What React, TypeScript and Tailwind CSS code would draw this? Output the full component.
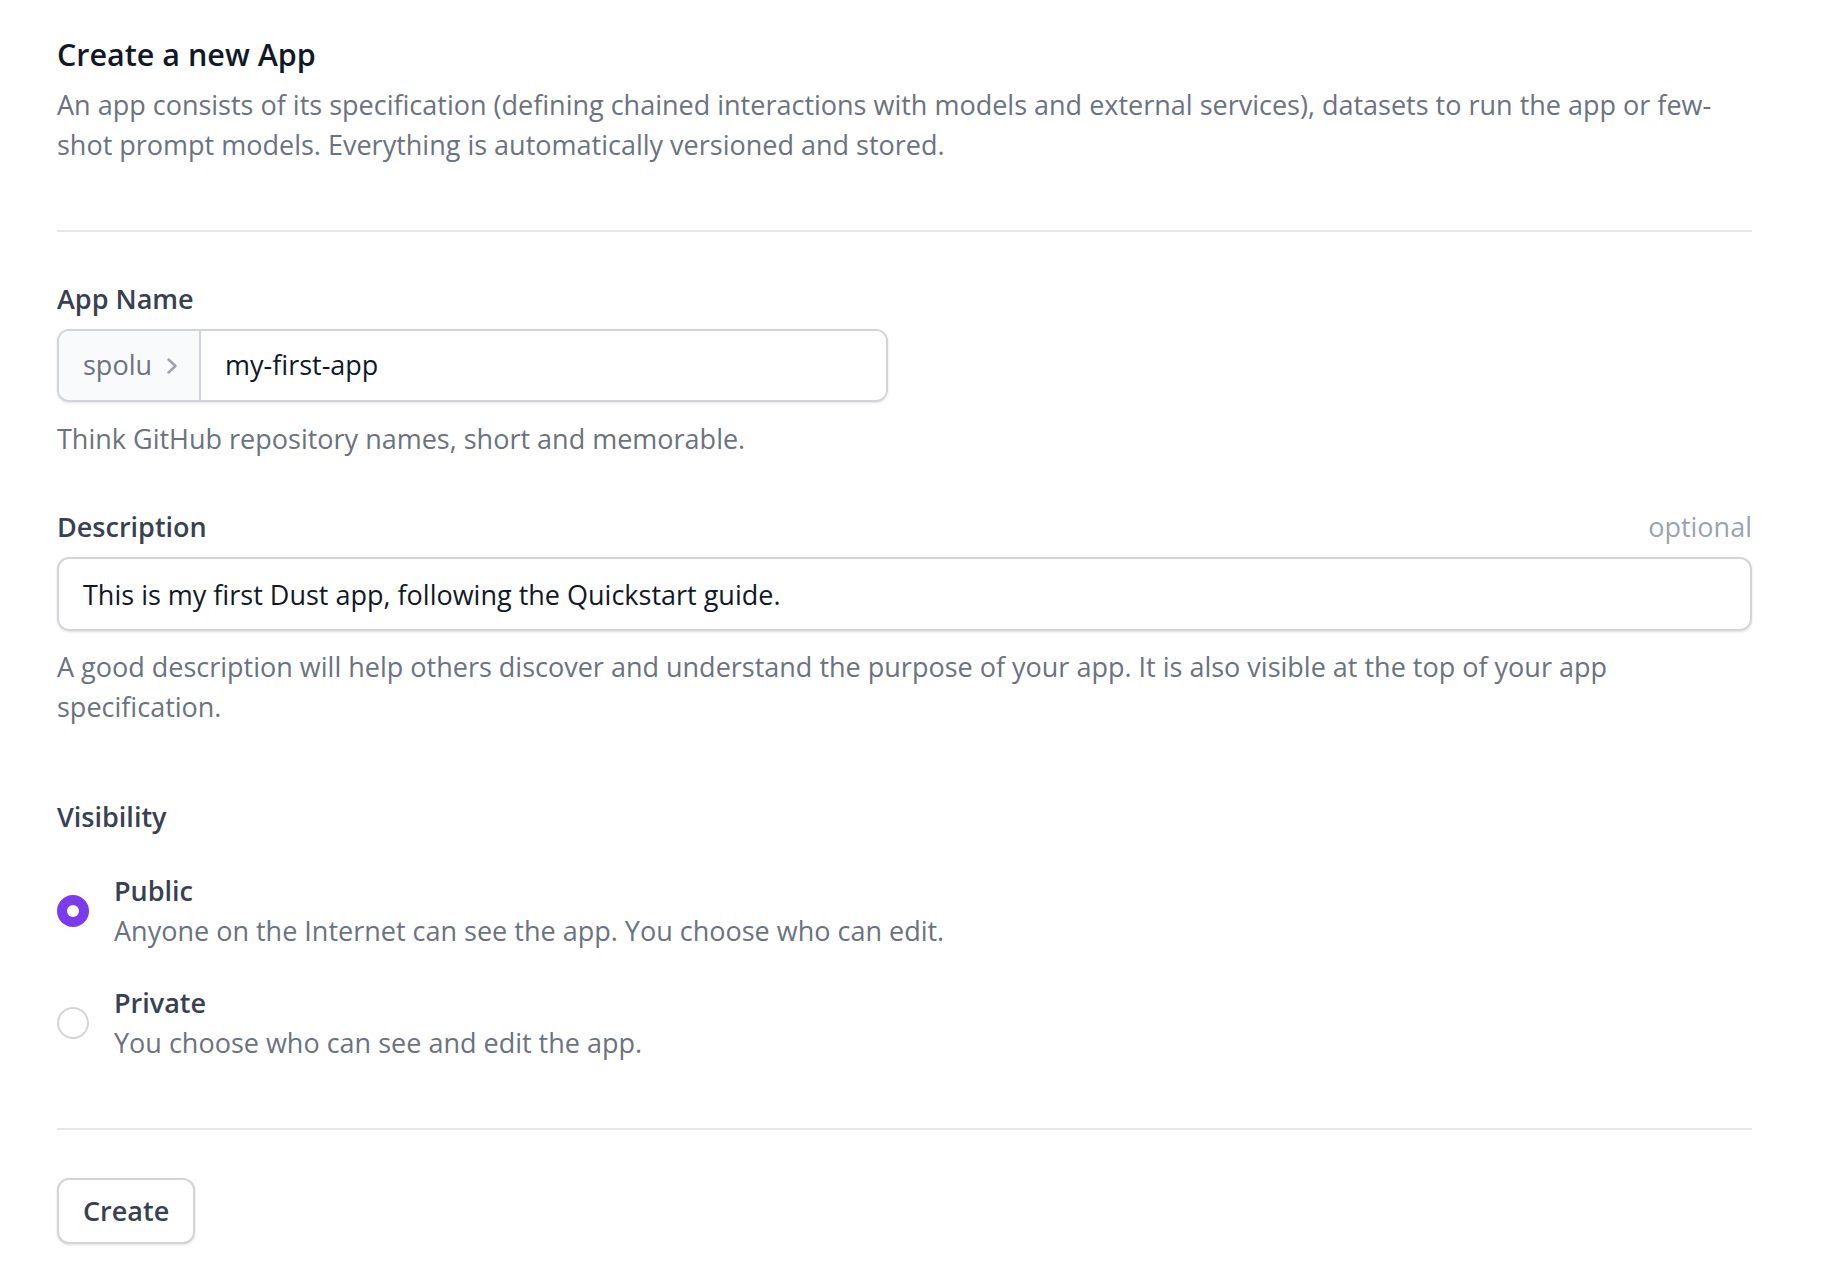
import React, { useState } from 'react'

const font = "font-['Open_Sans',sans-serif]"

const Radio: React.FC<{ checked: boolean; onClick: () => void }> = ({ checked, onClick }) => (
  <button
    onClick={onClick}
    className={`w-[32px] h-[32px] rounded-full flex items-center justify-center shrink-0 ${
      checked ? 'bg-[#7c3aed]' : 'bg-white border-2 border-[#d1d5db]'
    }`}
  >
    {checked && <span className="w-[12px] h-[12px] rounded-full bg-white" />}
  </button>
)

const App: React.FC = () => {
  const [name, setName] = useState('my-first-app')
  const [description, setDescription] = useState('This is my first Dust app, following the Quickstart guide.')
  const [visibility, setVisibility] = useState<'public' | 'private'>('public')

  return (
    <div className={`min-h-screen bg-white ${font}`}>
      <div className="w-[1752px] pl-[57px] pt-[34px] pb-10">
        <h1 className="text-[30.5px] leading-[40px] font-semibold text-[#111827]">Create a new App</h1>
        <p className="mt-[11px] text-[27px] leading-[40px] text-[#6b7280]">
          An app consists of its specification (defining chained interactions with models and external services), datasets to run the app or few-shot prompt models. Everything is automatically versioned and stored.
        </p>

        <div className="mt-[65px] border-t-2 border-[#e5e7eb]" />

        <div className="mt-[47px]">
          <label className="block text-[27px] leading-[40px] font-semibold text-[#374151]">App Name</label>
          <div className="mt-[10px] flex w-[831px] h-[73px] rounded-[12px] border-2 border-[#d1d5db] shadow-sm overflow-hidden">
            <div className="flex items-center pl-[24px] pr-[22px] bg-[#f9fafb] border-r-2 border-[#d1d5db] text-[27px] text-[#6b7280]">
              <span>spolu</span>
              <svg className="ml-[15px]" width="10" height="16" viewBox="0 0 10 16" fill="none" stroke="#9ca3af" strokeWidth="2.5" strokeLinecap="round" strokeLinejoin="round">
                <path d="M1.5 1.5L8.5 8l-7 6.5" />
              </svg>
            </div>
            <input
              value={name}
              onChange={(e) => setName(e.target.value)}
              className="flex-1 px-[24px] text-[27px] text-[#111827] outline-none bg-white"
            />
          </div>
          <p className="mt-[17px] text-[27px] leading-[40px] text-[#6b7280]">Think GitHub repository names, short and memorable.</p>
        </div>

        <div className="mt-[48px]">
          <div className="flex justify-between items-center">
            <label className="text-[27px] leading-[40px] font-semibold text-[#374151]">Description</label>
            <span className="text-[27px] leading-[40px] text-[#9ca3af]">optional</span>
          </div>
          <input
            value={description}
            onChange={(e) => setDescription(e.target.value)}
            className="mt-[10px] block w-full h-[74px] px-[24px] rounded-[12px] border-2 border-[#d1d5db] shadow-sm text-[27px] text-[#111827] outline-none"
          />
          <p className="mt-[16px] text-[27px] leading-[40px] text-[#6b7280]">
            A good description will help others discover and understand the purpose of your app. It is also visible at the top of your app specification.
          </p>
        </div>

        <div className="mt-[70px]">
          <div className="text-[27px] leading-[40px] font-semibold text-[#374151]">Visibility</div>
          <div className="mt-[34px] flex flex-col gap-[32px]">
            <div className="flex items-center gap-[25px]">
              <Radio checked={visibility === 'public'} onClick={() => setVisibility('public')} />
              <div>
                <div className="text-[27px] leading-[40px] font-semibold text-[#374151]">Public</div>
                <div className="text-[27px] leading-[40px] text-[#6b7280]">Anyone on the Internet can see the app. You choose who can edit.</div>
              </div>
            </div>
            <div className="flex items-center gap-[25px]">
              <Radio checked={visibility === 'private'} onClick={() => setVisibility('private')} />
              <div>
                <div className="text-[27px] leading-[40px] font-semibold text-[#374151]">Private</div>
                <div className="text-[27px] leading-[40px] text-[#6b7280]">You choose who can see and edit the app.</div>
              </div>
            </div>
          </div>
        </div>

        <div className="mt-[65px] border-t-2 border-[#e5e7eb]" />

        <button className="mt-[48px] h-[66px] px-[24px] rounded-[12px] border-2 border-[#d1d5db] bg-white shadow-sm text-[27px] font-semibold text-[#374151]">
          Create
        </button>
      </div>
    </div>
  )
}

export default App
